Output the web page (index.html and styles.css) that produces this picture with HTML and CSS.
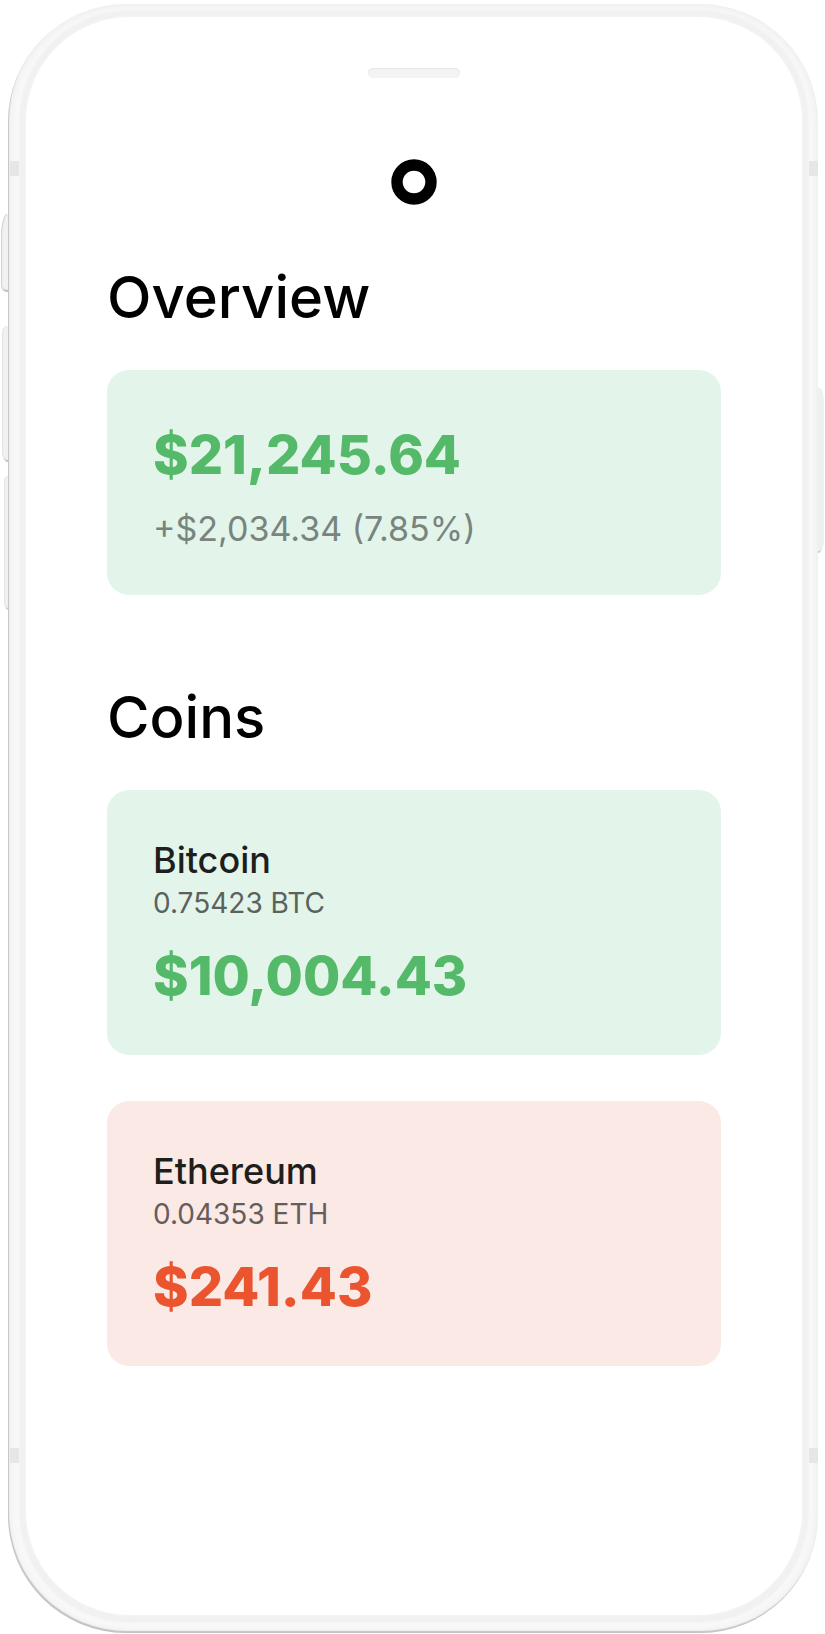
FILE: index.html
```html
<!DOCTYPE html>
<html lang="en">
<head>
  <meta charset="utf-8">
  <meta name="viewport" content="width=device-width, initial-scale=1">
  <title>Portfolio</title>
  <link rel="stylesheet" href="styles.css">
</head>
<body>
  <div class="phone">
    <span class="key key-mute"></span>
    <span class="key key-up"></span>
    <span class="key key-down"></span>
    <span class="key key-power"></span>
    <div class="shell">
      <span class="band band-top"></span>
      <span class="band band-bottom"></span>
      <div class="bezel">
        <main class="screen">
          <div class="speaker"></div>
          <svg class="logo" viewBox="0 0 46 46" role="img" aria-label="Logo">
            <circle cx="23" cy="23" r="17" fill="none" stroke="#000" stroke-width="11.4"/>
          </svg>
          <section class="section">
            <h1 class="heading">Overview</h1>
            <article class="card card-total gain">
              <p class="amount">$21,245.64</p>
              <p class="change">+$2,034.34 (7.85%)</p>
            </article>
          </section>
          <section class="section">
            <h2 class="heading">Coins</h2>
            <div class="coins">
              <article class="card gain">
                <h3 class="name">Bitcoin</h3>
                <p class="holding">0.75423 BTC</p>
                <p class="amount">$10,004.43</p>
              </article>
              <article class="card loss">
                <h3 class="name">Ethereum</h3>
                <p class="holding">0.04353 ETH</p>
                <p class="amount">$241.43</p>
              </article>
            </div>
          </section>
        </main>
      </div>
    </div>
  </div>
</body>
</html>
```
FILE: styles.css
```css
* {
  box-sizing: border-box;
}

body {
  margin: 0;
  padding: 4px 7px 1px 8px;
  min-height: 100vh;
  display: flex;
  background: #fff;
  font-family: Inter, "Liberation Sans", sans-serif;
  color: #000;
}

h1, h2, h3, p {
  margin: 0;
}

.phone {
  position: relative;
  flex: 1;
  display: flex;
}

.shell {
  position: relative;
  flex: 1;
  display: flex;
  padding: 6px 9px 10px 11px;
  border-radius: 118px;
  background: #f8f8f8;
  box-shadow: inset 1px -2px 1px #c4c4c4, inset 0 0 8px #e8e8e8;
}

.bezel {
  flex: 1;
  display: flex;
  padding: 7px 7px 8px;
  border-radius: 110px;
  background: #f1f1f1;
  box-shadow: inset 0 0 3px #f8f8f8;
}

.screen {
  flex: 1;
  display: flex;
  flex-direction: column;
  padding: 51px 81px 80px;
  border-radius: 104px;
  background: #fff;
  box-shadow: 0 0 3px #f8f8f8;
}

.band {
  position: absolute;
  left: 2px;
  right: 0;
  height: 15px;
  border: solid #e6e6e6;
  border-width: 0 9px;
}

.band-top {
  top: 157px;
}

.band-bottom {
  bottom: 170px;
}

.key {
  position: absolute;
  background: #f1f1f1;
}

.key-mute {
  left: -7px;
  top: 210px;
  width: 9px;
  height: 76px;
  border-radius: 6px 0 0 5px / 24px 0 0 5px;
  box-shadow: inset 1px 0 1px #d0d0d0, 1px 2px 1px #bdbdbd;
}

.key-up {
  left: -6px;
  top: 322px;
  width: 8px;
  height: 134px;
  border-radius: 5px 0 0 5px / 8px 0 0 8px;
  box-shadow: inset 1px 0 1px #e4e4e4, 1px 2px 1px #bdbdbd;
}

.key-down {
  left: -4px;
  top: 472px;
  width: 6px;
  height: 132px;
  border-radius: 4px 0 0 4px / 6px 0 0 6px;
  box-shadow: inset 1px 0 1px #e4e4e4, 1px 2px 1px #bdbdbd;
}

.key-power {
  right: -6px;
  top: 384px;
  width: 7px;
  height: 163px;
  border-radius: 0 5px 5px 0 / 0 12px 12px 0;
  background: #efefef;
  box-shadow: -1px 2px 1px #c8c8c8;
}

.speaker {
  align-self: center;
  width: 92px;
  height: 10px;
  border-radius: 5px;
  background: #f4f4f4;
  box-shadow: inset 0 1px 2px #e6e6e6;
}

.logo {
  align-self: center;
  width: 46px;
  height: 46px;
  margin: 81px 0 57px;
}

.section + .section {
  margin-top: 87px;
}

.heading {
  margin-bottom: 38px;
  font-size: 58px;
  font-weight: 500;
  line-height: 70px;
}

.coins {
  display: grid;
  gap: 46px;
}

.card {
  padding: 49px 46px;
  border-radius: 22px;
}

.card-total {
  padding: 55px 46px 46px;
}

.gain {
  background: #e3f5ea;
}

.loss {
  background: #fbe9e5;
}

.amount {
  font-size: 54px;
  font-weight: 800;
  line-height: 60px;
}

.gain .amount {
  color: #55b96a;
}

.loss .amount {
  color: #ea552f;
}

.change {
  margin-top: 24px;
  font-size: 34px;
  line-height: 40px;
  color: #78847d;
}

.name {
  font-size: 36px;
  font-weight: 500;
  line-height: 42px;
  color: #1e1e1c;
}

.holding {
  margin: 4px 0 25px;
  font-size: 28px;
  line-height: 36px;
  color: #5a625e;
}

.loss .holding {
  color: #645d5b;
}
```
